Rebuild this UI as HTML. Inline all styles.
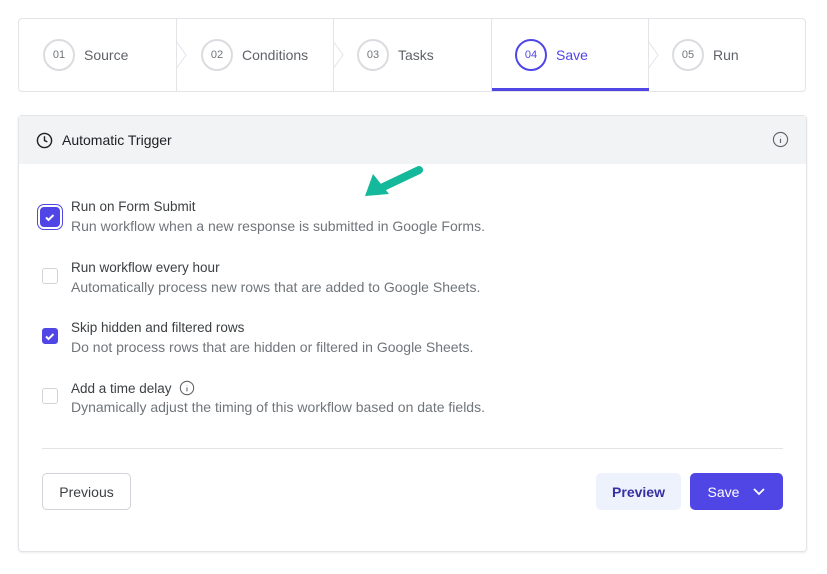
<!DOCTYPE html>
<html><head><style>
*{box-sizing:border-box;margin:0;padding:0}
body{width:827px;height:574px;background:#fff;font-family:"Liberation Sans",sans-serif;position:relative;overflow:hidden;color:#3c4043}
.steps{position:absolute;left:18px;top:18px;width:788px;height:74px;border:1px solid #e2e4e8;border-radius:4px;overflow:hidden}
.step{position:absolute;top:0;height:72px;display:flex;align-items:center;font-size:14px;color:#5f6368}
.circ{width:32px;height:32px;border:2px solid #dadce0;border-radius:50%;display:flex;align-items:center;justify-content:center;font-size:11px;color:#70757a;margin-right:9px}
.sep{position:absolute;top:0;width:1px;height:72px;background:#e2e4e8}
.card{position:absolute;left:18px;top:115px;width:789px;height:437px;border:1px solid #e2e4e8;border-radius:4px;box-shadow:0 1px 2px rgba(0,0,0,.08)}
.hdr{height:48px;background:#f1f3f4;display:flex;align-items:center;padding-left:17px;font-size:14px;color:#202124}
.row{position:absolute;left:23px}
.cb{position:absolute;left:0;width:16px;height:16px;border:1px solid #d0d3d7;border-radius:3px;background:#fff}
.cb.on{background:#4f46e5;border-color:#4f46e5}
.t{position:absolute;left:29px;font-size:13.5px;color:#3c4043;white-space:nowrap}
.d{position:absolute;left:29px;font-size:14px;color:#70757a;white-space:nowrap}
.btn{position:absolute;height:37px;border-radius:5px;display:flex;align-items:center;justify-content:center;font-size:14px}
</style></head><body>
<div class="steps">
 <div class="step" style="left:24px"><div class="circ">01</div>Source</div>
 <div class="sep" style="left:157px"></div>
 <div class="step" style="left:182px"><div class="circ">02</div>Conditions</div>
 <div class="sep" style="left:314px"></div>
 <div class="step" style="left:338px"><div class="circ">03</div>Tasks</div>
 <div class="sep" style="left:472px"></div>
 <div class="step" style="left:496px;color:#4f46e5"><div class="circ" style="border-color:#4f46e5;color:#4f46e5">04</div>Save</div>
 <div class="sep" style="left:629px"></div>
 <div class="step" style="left:653px"><div class="circ">05</div>Run</div>
 <div style="position:absolute;left:473px;width:157px;top:69px;height:3px;background:#4f46e5"></div>
 <svg style="position:absolute;left:0;top:0" width="788" height="72"><g fill="none" stroke="#e2e4e8"><path d="M157 22 L167 36 L157 50"/><path d="M314 22 L324 36 L314 50"/><path d="M629 22 L639 36 L629 50"/></g></svg>
</div>
<div class="card">
 <div class="hdr"><svg width="17" height="17" viewBox="0 0 24 24" fill="none" stroke="#202124" stroke-width="2"><circle cx="12" cy="12" r="10"/><path d="M12 6v6l4 2"/></svg><span style="margin-left:9px">Automatic Trigger</span>
 <svg style="position:absolute;left:753px;top:15px" width="17" height="17" viewBox="0 0 24 24" fill="none" stroke="#5f6368" stroke-width="1.6"><circle cx="12" cy="12" r="10"/><path d="M12 11v6M12 7.5v.5"/></svg></div>
 <svg style="position:absolute;left:340px;top:46px" width="70" height="40"><path d="M60 8 L18 28" stroke="#14b89a" stroke-width="8" stroke-linecap="round"/><path d="M6 34 L14 12 L30 32 Z" fill="#14b89a"/></svg>
 <div class="row" style="top:91px"><div class="cb on" style="top:0;left:-2px;width:20px;height:20px;box-shadow:0 0 0 2px #fff,0 0 0 3px #4f46e5;border-radius:4px"><svg width="18" height="18" viewBox="0 0 18 18"><path d="M5 9.5l2.5 2.5 5-5" stroke="#fff" stroke-width="2" fill="none"/></svg></div><div class="t" style="top:-8px">Run on Form Submit</div><div class="d" style="top:11px">Run workflow when a new response is submitted in Google Forms.</div></div>
 <div class="row" style="top:152px"><div class="cb" style="top:0"></div><div class="t" style="top:-8px">Run workflow every hour</div><div class="d" style="top:11px">Automatically process new rows that are added to Google Sheets.</div></div>
 <div class="row" style="top:212px"><div class="cb on" style="top:0"><svg width="14" height="14" viewBox="0 0 14 14"><path d="M3 7.5l2.5 2.5 5-5" stroke="#fff" stroke-width="2" fill="none"/></svg></div><div class="t" style="top:-8px">Skip hidden and filtered rows</div><div class="d" style="top:11px">Do not process rows that are hidden or filtered in Google Sheets.</div></div>
 <div class="row" style="top:272px"><div class="cb" style="top:0"></div><div class="t" style="top:-8px">Add a time delay <svg style="vertical-align:-3px;margin-left:4px" width="16" height="16" viewBox="0 0 24 24" fill="none" stroke="#5f6368" stroke-width="1.6"><circle cx="12" cy="12" r="10"/><path d="M12 11v6M12 7.5v.5"/></svg></div><div class="d" style="top:11px">Dynamically adjust the timing of this workflow based on date fields.</div></div>
 <div style="position:absolute;left:23px;top:332px;width:741px;height:1px;background:#e2e4e8"></div>
 <div class="btn" style="left:23px;top:357px;width:89px;border:1px solid #d0d3d7;color:#3c4043">Previous</div>
 <div class="btn" style="left:577px;top:357px;width:85px;background:#eef2fd;color:#3730a3;font-weight:bold">Preview</div>
 <div class="btn" style="left:671px;top:357px;width:93px;background:#4f46e5;color:#fff">Save <svg style="margin-left:14px" width="12" height="8"><path d="M1 1l5 5 5-5" stroke="#fff" stroke-width="1.8" fill="none"/></svg></div>
</div>
</body></html>
